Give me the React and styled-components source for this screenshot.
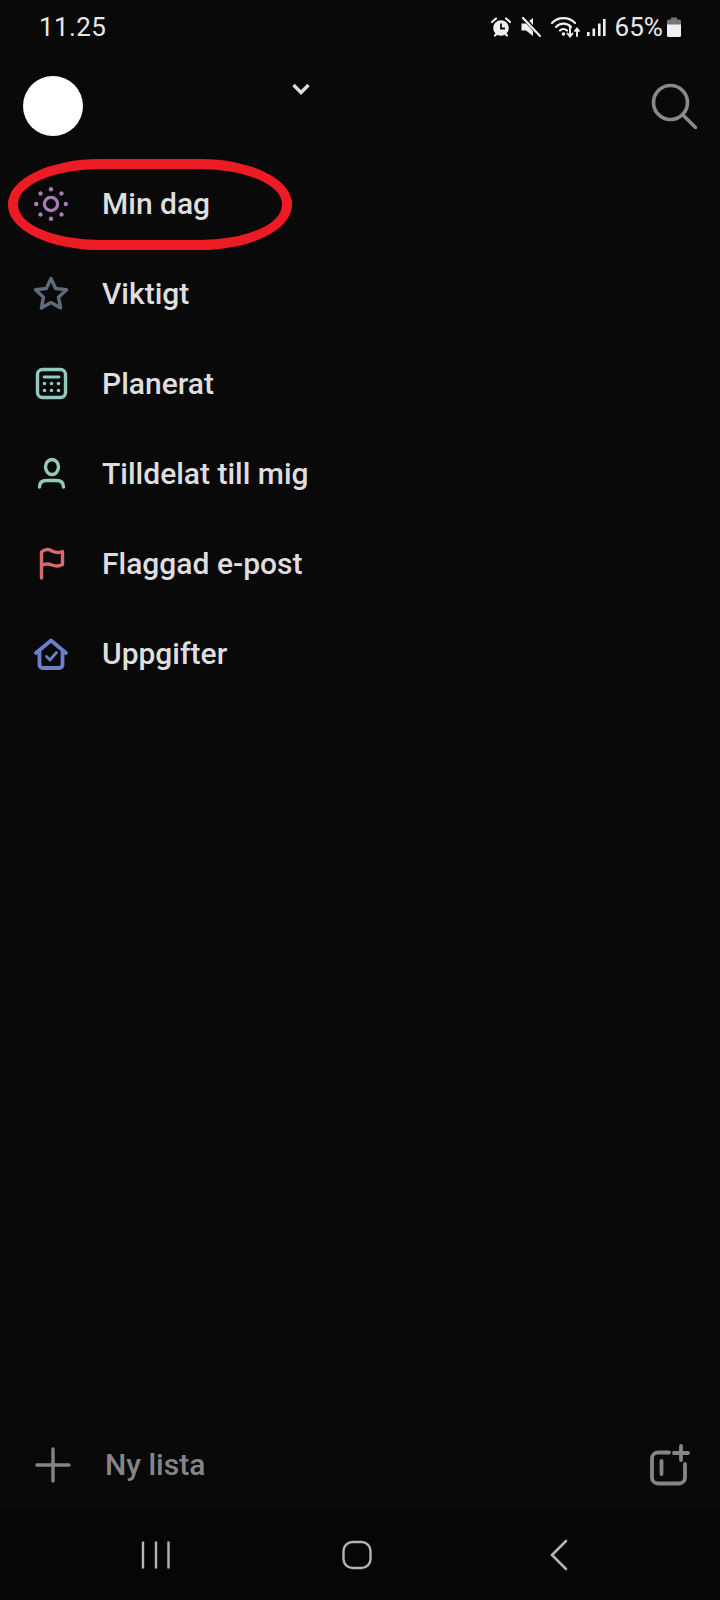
import React from "react";
import styled, { createGlobalStyle } from "styled-components";

const Global = createGlobalStyle`
  html, body { margin: 0; padding: 0; background: #09090a; }
  * { box-sizing: border-box; }
`;

const Screen = styled.div`
  width: 720px;
  height: 1600px;
  display: flex;
  flex-direction: column;
  background: #09090a;
  font-family: Roboto, "Noto Sans", sans-serif;
  overflow: hidden;
`;

const StatusBar = styled.div`
  height: 54px;
  padding: 0 39px 0 39px;
  display: flex;
  align-items: center;
  justify-content: space-between;
  color: #e8e8e8;
  font-size: 26px;
  letter-spacing: 0.4px;
`;

const StatusIcons = styled.div`
  display: flex;
  align-items: center;
`;

const Percent = styled.span`
  margin: 0 4px 0 8px;
  letter-spacing: 0.1px;
`;

const Header = styled.div`
  height: 105px;
  padding: 22px 23px 0 23px;
  display: flex;
  align-items: flex-start;
`;

const Avatar = styled.div`
  width: 60px;
  height: 60px;
  border-radius: 50%;
  background: #ffffff;
`;

const Chevron = styled.svg`
  margin: 7px 0 0 209px;
`;

const SearchIcon = styled.svg`
  margin: 7px 0 0 auto;
`;

const List = styled.div`
  display: flex;
  flex-direction: column;
`;

const Row = styled.div`
  position: relative;
  height: 90px;
  padding-left: 31px;
  display: flex;
  align-items: center;
  gap: 31px;
`;

const Label = styled.span`
  margin-bottom: 2px;
  color: #dedede;
  font-size: 30px;
  font-weight: 500;
`;

const Highlight = styled.div`
  position: absolute;
  left: 8px;
  top: 0;
  width: 284px;
  height: 91px;
  border: 10px solid #ed1c24;
  border-radius: 92px / 45px;
`;

const Spacer = styled.div`
  flex: 1;
`;

const NewList = styled.div`
  height: 90px;
  padding: 0 30px 0 35px;
  display: flex;
  align-items: center;
`;

const NewListLabel = styled.span`
  margin: 0 0 2px 34px;
  color: #858585;
  font-size: 30px;
  font-weight: 500;
`;

const GroupIcon = styled.svg`
  margin-left: auto;
`;

const NavBar = styled.div`
  height: 90px;
  padding: 0 55px 0 55px;
  display: grid;
  grid-template-columns: 201.5px 201px 203px;
  justify-items: center;
  align-items: center;
  background: #060606;
`;

const Ico = ({ children, color, ...rest }) => (
  <svg width="40" height="40" viewBox="0 0 40 40" fill="none" stroke={color} strokeWidth="3.4" strokeLinecap="round" strokeLinejoin="round" {...rest}>
    {children}
  </svg>
);

const SunIcon = () => {
  const dots = [0, 45, 90, 135, 180, 225, 270, 315];
  return (
    <Ico color="#a87cb6">
      <circle cx="20" cy="20" r="6.6" strokeWidth="3.2" />
      {dots.map((a) => (
        <circle key={a} cx="20" cy="5.2" r="2.2" fill="#a87cb6" stroke="none" transform={`rotate(${a} 20 20)`} />
      ))}
    </Ico>
  );
};

const StarIcon = () => (
  <Ico color="#5d6b7a">
    <path d="M20 4.5l4.7 10 10.8 1.3-8 7.4 2.1 10.7L20 28.6l-9.600 5.300 2.100-10.700-8-7.400 10.800-1.300z" />
  </Ico>
);

const CalendarIcon = () => (
  <Ico color="#8ecabf">
    <rect x="6.500" y="5.500" width="28" height="28" rx="5" />
    <path d="M13 13h15" strokeWidth="2.800" />
    <g fill="#8ecabf" stroke="none">
      <circle cx="13.500" cy="19.500" r="1.800" />
      <circle cx="20.500" cy="19.500" r="1.800" />
      <circle cx="27.500" cy="19.500" r="1.800" />
      <circle cx="13.500" cy="26.500" r="1.800" />
      <circle cx="20.500" cy="26.500" r="1.800" />
      <circle cx="27.500" cy="26.500" r="1.800" />
    </g>
  </Ico>
);

const PersonIcon = () => (
  <Ico color="#93cbb6">
    <ellipse cx="21" cy="13" rx="6.500" ry="7.500" />
    <path d="M8.500 33c0-4.500 3-6.500 7-6.500h10c4 0 7 2 7 6.500" />
  </Ico>
);

const FlagIcon = () => (
  <Ico color="#d76b6b">
    <path d="M10.500 34V8C14 5 18 5 21 7c4 2 7 2 10.500 .5v13c-3.500 2-6.500 2-10.500 .5-4-1.500-7-1.500-10.500 .5" />
  </Ico>
);

const HouseIcon = () => (
  <Ico color="#6c7fcb" strokeWidth="3.800">
    <path d="M5 19L20 6.500 35 19" />
    <path d="M8.500 18v13a3.500 3.500 0 0 0 3.500 3h16a3.500 3.500 0 0 0 3.500-3V18" />
    <path d="M15.500 22.500l3.500 3.500 6.500-7.500" strokeWidth="2.800" />
  </Ico>
);

const items = [
  { label: "Min dag", Icon: SunIcon, circled: true },
  { label: "Viktigt", Icon: StarIcon },
  { label: "Planerat", Icon: CalendarIcon },
  { label: "Tilldelat till mig", Icon: PersonIcon },
  { label: "Flaggad e-post", Icon: FlagIcon },
  { label: "Uppgifter", Icon: HouseIcon },
];

export default function App() {
  return (
    <Screen>
      <Global />
      <StatusBar>
        <span>11.25</span>
        <StatusIcons>
          <svg width="20" height="20" viewBox="0 0 20 20">
            <circle cx="10" cy="11" r="7.800" fill="#f0f0f0" />
            <path d="M1 5l4-3.500M19 5l-4-3.500M4 18.500l2-2M16 18.500l-2-2" stroke="#f0f0f0" strokeWidth="2.200" strokeLinecap="round" />
            <path d="M10 6.500V11.500h4" fill="none" stroke="#09090a" strokeWidth="1.800" />
          </svg>
          <svg width="20" height="20" viewBox="0 0 20 20" style={{ marginLeft: 10 }}>
            <path d="M0.500 6.500h4.500L12 1v18l-7-5.500H0.500z" fill="#f0f0f0" />
            <path d="M3 1l16 18" stroke="#09090a" strokeWidth="4" />
            <path d="M2 1l17 18" stroke="#f0f0f0" strokeWidth="2.200" strokeLinecap="round" />
          </svg>
          <svg width="30" height="22" viewBox="0 0 30 22" style={{ marginLeft: 10 }}>
            <g fill="none" stroke="#f0f0f0" strokeWidth="2.200" strokeLinecap="round">
              <path d="M1 7c6-6.500 17-6.500 23 0" />
              <path d="M5 11c4-4.500 11-4.500 15 0" />
              <path d="M9 14.500c2-2 5-2 7 0" />
              <path d="M19 11v9M16.500 17.500l2.500 3 2.500-3" strokeWidth="1.900" />
              <path d="M26 20v-7M24 15l2-2.500 2 2.500" strokeWidth="1.900" />
            </g>
            <circle cx="12.500" cy="18" r="1.800" fill="#f0f0f0" />
          </svg>
          <svg width="19" height="19" viewBox="0 0 19 19" style={{ marginLeft: 6 }}>
            <g fill="#f0f0f0">
              <rect x="0" y="14" width="2.600" height="4" />
              <rect x="5.500" y="10.500" width="2.600" height="7.500" />
              <rect x="11" y="5.500" width="2.600" height="12.500" />
              <rect x="16" y="1" width="2.600" height="17" />
            </g>
          </svg>
          <Percent>65%</Percent>
          <svg width="14" height="20" viewBox="0 0 14 20">
            <path d="M4 0.500h6v2h2.500a1.500 1.500 0 0 1 1.500 1.500v4.500H0V4a1.500 1.500 0 0 1 1.500-1.500H4z" fill="#777777" />
            <path d="M0 7.500h14v11a1.500 1.500 0 0 1-1.500 1.500h-11A1.500 1.500 0 0 1 0 18.500z" fill="#f0f0f0" />
          </svg>
        </StatusIcons>
      </StatusBar>

      <Header>
        <Avatar />
        <Chevron width="18" height="12" viewBox="0 0 18 12" fill="none" stroke="#dedede" strokeWidth="3.400">
          <path d="M1.500 2l7.500 7.500L16.500 2" />
        </Chevron>
        <SearchIcon width="46" height="46" viewBox="0 0 46 46" fill="none" stroke="#8a8a8a" strokeWidth="3.600" strokeLinecap="round">
          <circle cx="19.500" cy="19.500" r="17" />
          <path d="M32 32l12.500 12.500" />
        </SearchIcon>
      </Header>

      <List>
        {items.map(({ label, Icon, circled }) => (
          <Row key={label}>
            {circled && <Highlight />}
            <Icon />
            <Label>{label}</Label>
          </Row>
        ))}
      </List>

      <Spacer />

      <NewList>
        <svg width="36" height="36" viewBox="0 0 36 36" fill="none" stroke="#858585" strokeWidth="3.400" strokeLinecap="round">
          <path d="M18 2v32M2 18h32" />
        </svg>
        <NewListLabel>Ny lista</NewListLabel>
        <GroupIcon width="40" height="42" viewBox="0 0 40 42" fill="none" stroke="#858585" strokeWidth="3.800" strokeLinecap="round">
          <path d="M19 8.500H8a6 6 0 0 0-6 6v19a6 6 0 0 0 6 6h21a6 6 0 0 0 6-6V20" />
          <path d="M11.500 17v13" />
          <path d="M31 2v14M24 9h14" />
        </GroupIcon>
      </NewList>

      <NavBar>
        <svg width="30" height="30" viewBox="0 0 30 30" stroke="#b4b4b4" strokeWidth="2.400">
          <path d="M2 1.500v27M15 1.500v27M27.500 1.500v27" />
        </svg>
        <svg width="32" height="32" viewBox="0 0 32 32" fill="none" stroke="#b4b4b4" strokeWidth="2.400">
          <rect x="2.500" y="3" width="27" height="26" rx="9" />
        </svg>
        <svg width="20" height="32" viewBox="0 0 20 32" fill="none" stroke="#b4b4b4" strokeWidth="2.600" strokeLinecap="round">
          <path d="M17 2L3 16l14 14" />
        </svg>
      </NavBar>
    </Screen>
  );
}
